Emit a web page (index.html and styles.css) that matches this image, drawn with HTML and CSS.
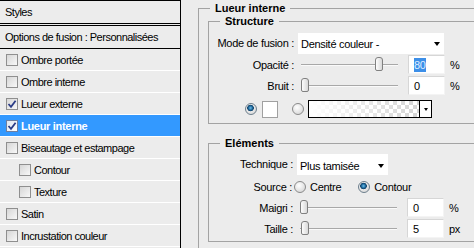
FILE: index.html
```html
<!DOCTYPE html>
<html lang="fr">
<head>
  <meta charset="UTF-8" />
  <title>Style de calque</title>
  <link rel="stylesheet" href="styles.css">
</head>
<body>
  <div class="window">
    <div class="styles-list">
      <div class="list-head">Styles</div>
      <div class="list-opt">Options de fusion : Personnalisées</div>
      <div class="item"><span class="cb"></span>Ombre portée</div>
      <div class="item"><span class="cb"></span>Ombre interne</div>
      <div class="item"><span class="cb checked"><svg width="10" height="10" viewBox="0 0 10 10"><path d="M1.5 5 L4 7.8 L8.6 1.8" fill="none" stroke="#2b3c86" stroke-width="1.8"/></svg></span>Lueur externe</div>
      <div class="item selected"><span class="cb checked"><svg width="10" height="10" viewBox="0 0 10 10"><path d="M1.5 5 L4 7.8 L8.6 1.8" fill="none" stroke="#2b3c86" stroke-width="1.8"/></svg></span>Lueur interne</div>
      <div class="item"><span class="cb"></span>Biseautage et estampage</div>
      <div class="item sub"><span class="cb"></span>Contour</div>
      <div class="item sub"><span class="cb"></span>Texture</div>
      <div class="item"><span class="cb"></span>Satin</div>
      <div class="item"><span class="cb"></span>Incrustation couleur</div>
    </div>

    <div class="settings">
      <fieldset class="group">
        <legend>Lueur interne</legend>

        <fieldset class="box structure">
          <legend>Structure</legend>
          <div class="row row-mode">
            <span class="lbl">Mode de fusion :</span>
            <div class="select sel-mode">Densité couleur -<span class="arrow"></span></div>
          </div>
          <div class="row">
            <span class="lbl">Opacité :</span>
            <div class="slider"><div class="track"></div><span class="thumb" style="left: 74px"></span></div>
            <div class="num"><span class="hl">80</span></div>
            <span class="unit">%</span>
          </div>
          <div class="row">
            <span class="lbl">Bruit :</span>
            <div class="slider"><div class="track"></div><span class="thumb" style="left: 0px"></span></div>
            <div class="num">0</div>
            <span class="unit">%</span>
          </div>
          <div class="row row-color">
            <span class="radio on"></span>
            <span class="swatch"></span>
            <span class="radio radio-grad"></span>
            <div class="grad"><div class="grad-fill"></div><div class="grad-btn"><span class="arrow small"></span></div></div>
          </div>
        </fieldset>

        <fieldset class="box elements">
          <legend>Eléments</legend>
          <div class="row row-tech">
            <span class="lbl">Technique :</span>
            <div class="select sel-tech">Plus tamisée<span class="arrow"></span></div>
          </div>
          <div class="row row-source">
            <span class="lbl">Source :</span>
            <span class="radio"></span><span class="opt">Centre</span>
            <span class="radio on radio-second"></span><span class="opt">Contour</span>
          </div>
          <div class="row">
            <span class="lbl">Maigri :</span>
            <div class="slider"><div class="track"></div><span class="thumb" style="left: 0px"></span></div>
            <div class="num">0</div>
            <span class="unit">%</span>
          </div>
          <div class="row">
            <span class="lbl">Taille :</span>
            <div class="slider"><div class="track"></div><span class="thumb" style="left: 1px"></span></div>
            <div class="num">5</div>
            <span class="unit">px</span>
          </div>
        </fieldset>
      </fieldset>
    </div>
  </div>
</body>
</html>
```

FILE: styles.css
```css
body {
  margin: 0;
  font-family: "Liberation Sans", Arial, sans-serif;
  font-size: 11px;
  letter-spacing: -0.3px;
  color: #000;
  background: #ececec;
  overflow: hidden;
}

.window {
  display: flex;
  width: 474px;
  height: 248px;
  overflow: hidden;
}

/* left list of styles */

.styles-list {
  flex: none;
  width: 180px;
  border-top: 1px solid #000;
  border-right: 1px solid #000;
  background: #ececec;
  letter-spacing: -0.5px;
}

.list-head,
.list-opt {
  height: 22px;
  line-height: 22px;
  padding-left: 5px;
}

.list-head {
  border-bottom: 3px double #000;
}

.list-opt {
  border-bottom: 1px solid #000;
}

.item {
  display: flex;
  align-items: center;
  height: 21px;
  padding-left: 6px;
  border-bottom: 1px solid #fff;
}

.item.sub {
  padding-left: 19px;
}

.item.selected {
  background: #3399ff;
  color: #fff;
  font-weight: bold;
  letter-spacing: -0.3px;
}

.cb {
  flex: none;
  display: flex;
  align-items: center;
  justify-content: center;
  width: 10px;
  height: 10px;
  margin-right: 3px;
  border: 1px solid #8f8f8f;
  background: linear-gradient(135deg, #d6d6d6, #f8f8f8);
}

.item.selected .cb {
  border-color: #6f7f9f;
  background: linear-gradient(135deg, #dfe6f0, #ffffff);
}

/* right side */

.settings {
  flex: none;
  width: 300px;
  padding-left: 17px;
}

fieldset {
  margin: 0;
  border: 1px solid #a3a3a3;
  min-width: 0;
}

legend {
  font-weight: bold;
  letter-spacing: 0;
  line-height: 13px;
  padding: 0 5px;
}

.group {
  margin-top: 2px;
  padding: 0 0 0 9px;
  height: 300px;
  border-right: none;
}

.group > legend {
  margin-left: 2px;
}

.box {
  padding: 0;
  border-right: none;
}

.box > legend {
  margin-left: 11px;
}

.structure {
  padding: 4px 0 1px;
}

.elements {
  margin-top: 13px;
  padding: 2px 0 2px;
}

.row {
  display: flex;
  align-items: center;
  height: 21px;
}

.row-mode {
  height: 22px;
}

.row-color {
  height: 26px;
  padding-left: 36px;
}

.row-tech {
  height: 24px;
}

.lbl {
  flex: none;
  width: 85px;
  text-align: right;
}

.elements .lbl {
  width: 84px;
}

.elements .row-source .lbl {
  width: 83px;
}

.select {
  display: flex;
  align-items: center;
  justify-content: space-between;
  box-sizing: border-box;
  height: 21px;
  margin-left: 4px;
  padding: 1px 4px 0 3px;
  background: #fff;
}

.sel-mode {
  width: 146px;
}

.sel-tech {
  width: 91px;
  margin-left: 4px;
  padding-top: 3px;
}

.arrow {
  width: 0;
  height: 0;
  border-left: 3.5px solid transparent;
  border-right: 3.5px solid transparent;
  border-top: 4px solid #000;
}

.arrow.small {
  border-left-width: 2.5px;
  border-right-width: 2.5px;
  border-top-width: 3px;
}

.slider {
  position: relative;
  flex: none;
  width: 97px;
  height: 15px;
  margin-left: 7px;
  margin-right: 3px;
}

.track {
  margin-top: 7px;
  height: 1px;
  background: #a8a8a8;
  border-bottom: 1px solid #fafafa;
}

.thumb {
  position: absolute;
  top: 0;
  width: 6px;
  height: 12px;
  border: 1px solid #808080;
  border-radius: 3px 3px 2px 2px;
  background: linear-gradient(to right, #fdfdfd, #d9d9d9);
}

.num {
  flex: none;
  box-sizing: border-box;
  width: 37px;
  height: 19px;
  margin-left: 7px;
  padding-left: 5px;
  line-height: 18px;
  border: 1px solid #d6d6d6;
  border-bottom-color: #f4f4f4;
  border-right-color: #f4f4f4;
  background: #fff;
}

.hl {
  background: #3d8fe8;
  color: #dfeeff;
  padding: 1px 0;
}

.unit {
  margin-left: 5px;
}

.radio {
  flex: none;
  box-sizing: border-box;
  width: 12px;
  height: 12px;
  border: 1px solid #8a8a8a;
  border-radius: 50%;
  background: radial-gradient(circle at 40% 35%, #ffffff, #cfcfcf);
}

.radio.on {
  border-color: #6d7f8d;
  background: radial-gradient(circle at 45% 40%, #6fc0ee 0, #1f6a9c 2px, #0f3f66 3px, rgba(255,255,255,0) 3.6px),
              radial-gradient(circle at 40% 35%, #ffffff, #cfcfcf);
}

.swatch {
  flex: none;
  box-sizing: border-box;
  width: 16px;
  height: 17px;
  margin-left: 5px;
  border: 1px solid #a0a0a0;
  background: #fff;
}

.radio-grad {
  margin-left: 14px;
}

.grad {
  display: flex;
  box-sizing: border-box;
  width: 124px;
  height: 18px;
  margin-left: 4px;
  border: 1px solid #000;
}

.grad-fill {
  flex: 1;
  background: linear-gradient(to right, #fff, rgba(255, 255, 255, 0)),
              repeating-conic-gradient(#d4d4d4 0 25%, #fff 0 50%) 0 0 / 8px 8px;
}

.grad-btn {
  display: flex;
  align-items: center;
  justify-content: center;
  width: 11px;
  border-left: 1px solid #000;
  background: #fff;
}

.row-source .radio {
  margin-left: 2px;
}

.row-source .radio-second {
  margin-left: 17px;
}

.opt {
  margin-left: 4px;
}
```
